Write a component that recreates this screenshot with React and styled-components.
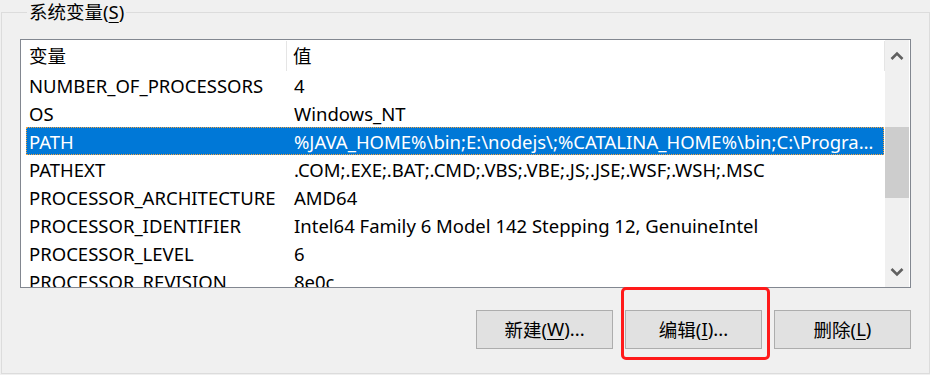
import React from 'react';
import styled, { createGlobalStyle } from 'styled-components';

const GlobalStyle = createGlobalStyle`
  html, body {
    margin: 0;
    padding: 0;
    background: #f0f0f0;
  }
  body {
    font-family: "Noto Sans", "Noto Sans CJK SC", sans-serif;
    color: #000;
  }
`;

const Page = styled.div`
  width: 930px;
  height: 375px;
  overflow: hidden;
  background: #f0f0f0;
  position: relative;
`;

const GroupBox = styled.fieldset`
  box-sizing: border-box;
  margin: 0 0 0 1px;
  width: 929px;
  height: 374px;
  padding: 15px 17px 0 18px;
  border: 1px solid #dcdcdc;
  display: flex;
  flex-direction: column;
  min-width: 0;
`;

const Legend = styled.legend`
  font-size: 18.5px;
  line-height: 24px;
  padding: 0 2px;
  margin-left: 7px;
  color: #000;
`;

const Key = styled.span`
  text-decoration: underline;
  text-underline-offset: 3px;
  text-decoration-thickness: 1px;
`;

const ListBox = styled.div`
  box-sizing: border-box;
  width: 891px;
  height: 249px;
  border: 1px solid #828790;
  background: #fff;
  display: flex;
  overflow: hidden;
`;

const ListArea = styled.div`
  flex: 1;
  overflow: hidden;
  padding-left: 5px;
`;

const Header = styled.div`
  display: flex;
  height: 31px;
  align-items: stretch;
`;

const HeaderCell = styled.div`
  box-sizing: border-box;
  width: ${p => p.$w};
  flex: ${p => (p.$grow ? 1 : 'none')};
  padding-left: ${p => p.$pad || '3px'};
  font-size: 18.5px;
  display: flex;
  align-items: center;
  border-right: 1px solid #e5e5e5;
  margin: 1px 0 0;
  padding-bottom: 2px;
`;

const Row = styled.div`
  box-sizing: border-box;
  display: flex;
  height: 28px;
  align-items: center;
  font-size: 18.5px;
  white-space: nowrap;
  background: ${p => (p.$selected ? '#0078d7' : 'transparent')};
  color: ${p => (p.$selected ? '#fff' : '#000')};
  border: 1px dotted ${p => (p.$selected ? '#f4a340' : 'transparent')};
  margin-right: 1px;
`;

const Cell = styled.div`
  box-sizing: border-box;
  width: ${p => p.$w};
  flex: ${p => (p.$grow ? 1 : 'none')};
  padding-left: ${p => p.$pad};
  padding-right: ${p => (p.$grow ? '8px' : '0')};
  overflow: hidden;
  text-overflow: ellipsis;
`;

const ScrollBar = styled.div`
  width: 24px;
  background: #f0f0f0;
  display: flex;
  flex-direction: column;
  align-items: stretch;
  margin-right: 1px;
`;

const ArrowBtn = styled.div`
  height: 31px;
  display: flex;
  align-items: center;
  justify-content: center;
  flex: none;
`;

const Track = styled.div`
  flex: 1;
  padding-top: 56px;
`;

const Thumb = styled.div`
  height: 71px;
  background: #cdcdcd;
`;

const ButtonRow = styled.div`
  width: 891px;
  display: flex;
  justify-content: flex-end;
  gap: 12px;
  margin-top: 22px;
`;

const Button = styled.div`
  box-sizing: border-box;
  width: 137px;
  height: 39px;
  background: #e1e1e1;
  border: 1px solid #adadad;
  display: flex;
  align-items: center;
  justify-content: center;
  font-size: 18.5px;
  padding-bottom: 2px;
`;

const Highlight = styled.div`
  position: absolute;
  left: 621px;
  top: 287px;
  width: 149px;
  height: 73px;
  box-sizing: border-box;
  border: 3px solid #ff1a1a;
  border-radius: 5px;
  pointer-events: none;
`;

const Chevron = ({ up }) => (
  <svg width="14" height="10" viewBox="0 0 14 10">
    <path
      d={up ? 'M1.5 8 L7 2.5 L12.5 8' : 'M1.5 2 L7 7.5 L12.5 2'}
      fill="none"
      stroke="#606060"
      strokeWidth="2.6"
    />
  </svg>
);

const rows = [
  ['NUMBER_OF_PROCESSORS', '4'],
  ['OS', 'Windows_NT'],
  ['PATH', '%JAVA_HOME%\\bin;E:\\nodejs\\;%CATALINA_HOME%\\bin;C:\\Program Files\\Common Files', true],
  ['PATHEXT', '.COM;.EXE;.BAT;.CMD;.VBS;.VBE;.JS;.JSE;.WSF;.WSH;.MSC'],
  ['PROCESSOR_ARCHITECTURE', 'AMD64'],
  ['PROCESSOR_IDENTIFIER', 'Intel64 Family 6 Model 142 Stepping 12, GenuineIntel'],
  ['PROCESSOR_LEVEL', '6'],
  ['PROCESSOR_REVISION', '8e0c'],
];

const App = () => {
  return (
    <Page>
      <GlobalStyle />
      <GroupBox>
        <Legend>
          系统变量(<Key>S</Key>)
        </Legend>
        <ListBox>
          <ListArea>
            <Header>
              <HeaderCell $w="261px">变量</HeaderCell>
              <HeaderCell $grow $pad="6px">值</HeaderCell>
            </Header>
            {rows.map(([name, value, sel]) => (
              <Row key={name} $selected={sel}>
                <Cell $w="260px" $pad="2px">{name}</Cell>
                <Cell $grow $pad="7px">{value}</Cell>
              </Row>
            ))}
          </ListArea>
          <ScrollBar>
            <ArrowBtn><Chevron up /></ArrowBtn>
            <Track><Thumb /></Track>
            <ArrowBtn><Chevron /></ArrowBtn>
          </ScrollBar>
        </ListBox>
        <ButtonRow>
          <Button>新建(<Key>W</Key>)...</Button>
          <Button>编辑(<Key>I</Key>)...</Button>
          <Button>删除(<Key>L</Key>)</Button>
        </ButtonRow>
      </GroupBox>
      <Highlight />
    </Page>
  );
};

export default App;
